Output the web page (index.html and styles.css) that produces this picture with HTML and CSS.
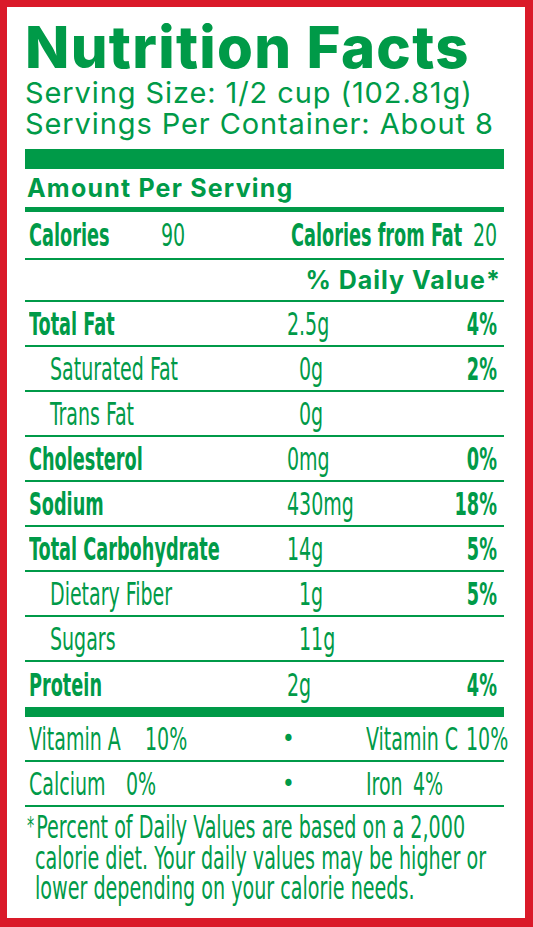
FILE: index.html
```html
<!DOCTYPE html>
<html lang="en">
<head>
<meta charset="utf-8">
<title>Nutrition Facts</title>
<link rel="stylesheet" href="styles.css">
</head>
<body>
<div class="label">
  <h1 class="title">Nutrition Facts</h1>
  <p class="serving">Serving Size: 1/2 cup (102.81g)</p>
  <p class="serving">Servings Per Container: About 8</p>
  <div class="bar-thick"></div>
  <div class="amount-head">Amount Per Serving</div>
  <div class="row cal-row">
    <span class="cell first"><span class="c b">Calories</span></span>
    <span class="cell"><span class="c">90</span></span>
    <span class="cell"><span class="c b">Calories from Fat</span></span>
    <span class="cell"><span class="c">20</span></span>
  </div>
  <div class="row dv-row"><span class="dv">% Daily Value*</span></div>
  <div class="row">
    <span class="name"><span class="c b">Total Fat</span></span>
    <span class="amt"><span class="c">2.5g</span></span>
    <span class="pct"><span class="c b r">4%</span></span>
  </div>
  <div class="row sub">
    <span class="name"><span class="c">Saturated Fat</span></span>
    <span class="amt"><span class="c">0g</span></span>
    <span class="pct"><span class="c b r">2%</span></span>
  </div>
  <div class="row sub">
    <span class="name"><span class="c">Trans Fat</span></span>
    <span class="amt"><span class="c">0g</span></span>
    <span class="pct"></span>
  </div>
  <div class="row">
    <span class="name"><span class="c b">Cholesterol</span></span>
    <span class="amt"><span class="c">0mg</span></span>
    <span class="pct"><span class="c b r">0%</span></span>
  </div>
  <div class="row">
    <span class="name"><span class="c b">Sodium</span></span>
    <span class="amt"><span class="c">430mg</span></span>
    <span class="pct"><span class="c b r">18%</span></span>
  </div>
  <div class="row">
    <span class="name"><span class="c b">Total Carbohydrate</span></span>
    <span class="amt"><span class="c">14g</span></span>
    <span class="pct"><span class="c b r">5%</span></span>
  </div>
  <div class="row sub">
    <span class="name"><span class="c">Dietary Fiber</span></span>
    <span class="amt"><span class="c">1g</span></span>
    <span class="pct"><span class="c b r">5%</span></span>
  </div>
  <div class="row sub">
    <span class="name"><span class="c">Sugars</span></span>
    <span class="amt"><span class="c">11g</span></span>
    <span class="pct"></span>
  </div>
  <div class="row last">
    <span class="name"><span class="c b">Protein</span></span>
    <span class="amt"><span class="c">2g</span></span>
    <span class="pct"><span class="c b r">4%</span></span>
  </div>
  <div class="bar-mid"></div>
  <div class="row vit-row vit-1">
    <span class="cell first"><span class="c">Vitamin A</span></span>
    <span class="cell"><span class="c">10%</span></span>
    <span class="cell dot">&bull;</span>
    <span class="cell"><span class="c">Vitamin C</span></span>
    <span class="cell"><span class="c">10%</span></span>
  </div>
  <div class="row vit-row vit-2">
    <span class="cell first"><span class="c">Calcium</span></span>
    <span class="cell"><span class="c">0%</span></span>
    <span class="cell dot">&bull;</span>
    <span class="cell"><span class="c">Iron</span></span>
    <span class="cell"><span class="c">4%</span></span>
  </div>
  <div class="foot">
    <span class="foot-line first-line"><span class="star">*</span>Percent of Daily Values are based on a 2,000</span>
    <span class="foot-line">calorie diet. Your daily values may be higher or</span>
    <span class="foot-line">lower depending on your calorie needs.</span>
  </div>
</div>
</body>
</html>
```

FILE: styles.css
```css
html, body {
  margin: 0;
  padding: 0;
  background: #ffffff;
}

.label {
  box-sizing: border-box;
  width: 533px;
  height: 927px;
  border-style: solid;
  border-color: #da1a29;
  border-width: 7px 8px 9px 7px;
  padding: 0 21px 0 18px;
  color: #009a48;
  overflow: hidden;
}

.title {
  margin: 0;
  padding-top: 10px;
  font-family: "Inter", "DejaVu Sans", sans-serif;
  font-weight: 800;
  font-size: 58px;
  line-height: 60px;
  letter-spacing: 1.3px;
  white-space: nowrap;
}

.serving {
  margin: 0;
  font-family: "Inter", "DejaVu Sans", sans-serif;
  font-weight: 400;
  font-size: 29px;
  line-height: 31px;
  letter-spacing: 0.9px;
  white-space: nowrap;
}

.bar-thick {
  height: 20px;
  background: #009a48;
  margin-top: 10px;
}

.amount-head {
  font-family: "Inter", "DejaVu Sans", sans-serif;
  font-weight: 700;
  font-size: 25px;
  letter-spacing: 1.2px;
  line-height: 38px;
  padding-left: 2px;
  border-bottom: 5px solid #009a48;
  white-space: nowrap;
}

.row {
  display: grid;
  grid-template-columns: 262px 1fr auto;
  align-items: center;
  height: 43px;
  border-bottom: 2px solid #009a48;
  font-family: "DejaVu Sans", sans-serif;
  font-stretch: condensed;
  font-size: 32px;
  white-space: nowrap;
}

.row > * {
  min-width: 0;
}

.row.last {
  border-bottom: none;
  height: 45px;
}

.name {
  padding-left: 4px;
}

.sub .name {
  padding-left: 25px;
}

.sub .amt {
  padding-left: 12px;
}

.pct {
  padding-right: 7px;
  text-align: right;
}

.c {
  display: inline-block;
  transform: scaleX(0.66);
  transform-origin: left center;
}

.c.b {
  font-weight: 700;
  transform: scaleX(0.615);
}

.c.r {
  transform-origin: right center;
}

.cal-row {
  grid-template-columns: 136px 130px 182px 1fr;
  height: 46px;
}

.cell.first {
  padding-left: 4px;
}

.dv-row {
  display: flex;
  justify-content: flex-end;
  height: 40px;
}

.dv {
  font-family: "Inter", "DejaVu Sans", sans-serif;
  font-stretch: normal;
  font-weight: 700;
  font-size: 25px;
  letter-spacing: 1px;
  padding-right: 3px;
}

.bar-mid {
  height: 10px;
  background: #009a48;
}

.vit-1 {
  grid-template-columns: 120px 136px 85px 100px 1fr;
}

.vit-2 {
  grid-template-columns: 101px 155px 85px 47px 1fr;
}

.dot {
  font-size: 24px;
  padding-left: 1px;
}

.foot {
  margin-top: 5px;
  font-family: "DejaVu Sans", sans-serif;
  font-stretch: condensed;
  font-size: 32px;
  line-height: 30.5px;
  white-space: nowrap;
}

.foot-line {
  display: block;
  padding-left: 15px;
  transform: scaleX(0.665);
  transform-origin: left center;
}

.foot-line.first-line {
  padding-left: 3px;
}

.star {
  display: inline-block;
  font-size: 24px;
  vertical-align: top;
  margin-right: 3px;
  position: relative;
  top: -1px;
}
```
